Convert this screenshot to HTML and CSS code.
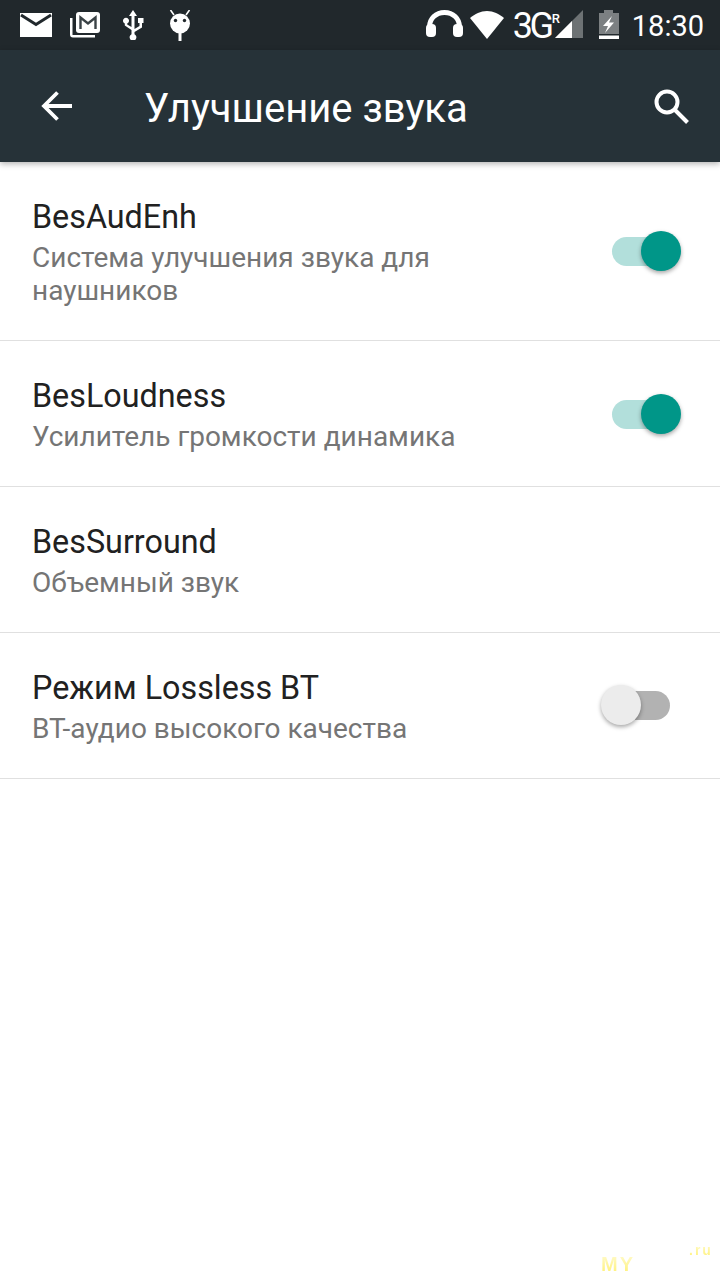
FILE: index.html
```html
<!DOCTYPE html>
<html lang="ru">
<head>
<meta charset="utf-8">
<title>Улучшение звука</title>
<link rel="stylesheet" href="styles.css">
</head>
<body>
<div class="screen">
  <div class="statusbar">
    <div class="status-left">
      <svg class="ic-mail" viewBox="0 0 32 24"><path fill="#fff" d="M0 0h32v24H0z"/><path fill="none" stroke="#21282c" stroke-width="3" d="M1 2l15 9.500L31 2"/></svg>
      <svg class="ic-gmail" viewBox="0 0 30 26"><rect x="6" y="0" width="24" height="21" rx="3" fill="#fff"/><path fill="none" stroke="#3a4246" stroke-width="2.400" d="M10.500 17V5.500l7.500 6 7.500-6V17"/><path fill="#fff" d="M0 6h2.500v17H25v2.500H3a3 3 0 0 1-3-3z"/></svg>
      <svg class="ic-usb" viewBox="0 0 22 30"><path fill="#fff" d="M11 0l4 6h-2.500v13l5-3v-3H16V8h5.500v5H20v4.500l-7.500 4.500v2.200a3.400 3.400 0 1 1-3 0V20L2.800 15.500v-2a3 3 0 1 1 2.400 0v1L9.500 17V6H7z"/></svg>
      <svg class="ic-android" viewBox="0 0 24 31"><path stroke="#fff" stroke-width="1.600" d="M6 5L2.500 0M18 5l3.500-5"/><circle cx="12" cy="13.500" r="10" fill="#fff"/><path fill="#fff" d="M10.500 22h3v9h-3z"/><circle cx="7.500" cy="10.500" r="1.700" fill="#21282c"/><circle cx="16.500" cy="10.500" r="1.700" fill="#21282c"/></svg>
    </div>
    <div class="status-right">
      <svg class="ic-head" viewBox="0 0 37 27"><path fill="none" stroke="#fff" stroke-width="5" d="M3.500 22v-5C3.500 8.500 10 2.500 18.500 2.500S33.500 8.500 33.500 17v5"/><rect x="0" y="14" width="10" height="13" rx="4" fill="#fff"/><rect x="27" y="14" width="10" height="13" rx="4" fill="#fff"/></svg>
      <svg class="ic-wifi" viewBox="0 0 34 28"><path fill="#fff" d="M17 28L0 7C5 3 10.500 0 17 0s12 3 17 7z"/></svg>
      <span class="net">3G<span class="net-r">R</span></span>
      <svg class="ic-signal" viewBox="0 0 28 28"><path fill="#6d7274" d="M28 0v28H0z"/><path fill="#fff" d="M17 11v17H0z"/></svg>
      <svg class="ic-batt" viewBox="0 0 20 29"><path fill="#7c8082" d="M5 0h9v3h6v21H0V3h5z"/><path fill="#fff" d="M0 25.500h20V29H0zM13 6L4 16h5l-3 7 9-10.500h-5l3-6.500z"/></svg>
      <span class="clock">18:30</span>
    </div>
  </div>
  <header class="toolbar">
    <svg class="ic-back" viewBox="0 0 32 32"><path fill="none" stroke="#fff" stroke-width="3.800" d="M32 16H4M17.500 2.500L4 16l13.500 13.500"/></svg>
    <h1 class="title">Улучшение звука</h1>
    <svg class="ic-search" viewBox="0 0 36 36"><circle cx="14" cy="14" r="10.500" fill="none" stroke="#fff" stroke-width="4"/><path stroke="#fff" stroke-width="4" d="M21.500 21.500L34.500 34.500"/></svg>
  </header>
  <main class="list">
    <section class="row">
      <div class="text">
        <div class="name">BesAudEnh</div>
        <div class="desc">Система улучшения звука для<br>наушников</div>
      </div>
      <div class="switch on"><span class="track"></span><span class="thumb"></span></div>
    </section>
    <section class="row">
      <div class="text">
        <div class="name">BesLoudness</div>
        <div class="desc">Усилитель громкости динамика</div>
      </div>
      <div class="switch on"><span class="track"></span><span class="thumb"></span></div>
    </section>
    <section class="row">
      <div class="text">
        <div class="name">BesSurround</div>
        <div class="desc">Объемный звук</div>
      </div>
    </section>
    <section class="row">
      <div class="text">
        <div class="name">Режим Lossless BT</div>
        <div class="desc">BT-аудио высокого качества</div>
      </div>
      <div class="switch off"><span class="track"></span><span class="thumb"></span></div>
    </section>
  </main>
  <div class="wm-my">MY</div>
  <div class="wm-ru">.ru</div>
</div>
</body>
</html>
```
FILE: styles.css
```css
* { box-sizing: border-box; }
html, body { margin: 0; padding: 0; }
body { background: #fff; font-family: Roboto, "Noto Sans", sans-serif; }
.screen { position: relative; width: 720px; height: 1280px; overflow: hidden; background: #fff; }

.statusbar { height: 50px; background: #21282c; display: flex; justify-content: space-between; align-items: flex-start; padding: 10px 16px 0 20px; color: #fff; }
.status-left, .status-right { display: flex; align-items: flex-start; }
.statusbar svg { display: block; flex: none; }
.ic-mail { width: 32px; height: 24px; margin-top: 3px; }
.ic-gmail { width: 30px; height: 26px; margin: 2px 0 0 18px; }
.ic-usb { width: 22px; height: 30px; margin-left: 22px; }
.ic-android { width: 24px; height: 31px; margin-left: 24px; }
.ic-head { width: 37px; height: 27px; }
.ic-wifi { width: 34px; height: 28px; margin: 1px 0 0 7px; }
.net { font-size: 36px; line-height: 32px; letter-spacing: -3.500px; margin-left: 9px; width: 42px; white-space: nowrap; position: relative; }
.net-r { position: absolute; left: 39px; top: 2px; font-size: 13px; line-height: 14px; letter-spacing: 0; font-weight: 500; }
.ic-signal { width: 28px; height: 28px; margin-left: 0; }
.ic-batt { width: 20px; height: 29px; margin-left: 16px; }
.clock { font-size: 29px; line-height: 32px; margin-left: 13px; }

.toolbar { height: 112px; background: #263238; display: flex; align-items: center; padding: 0 31px 0 40px; box-shadow: 0 2px 6px rgba(0,0,0,.3); position: relative; z-index: 1; }
.ic-back { width: 32px; height: 32px; flex: none; }
.title { flex: 1; margin: 6px 0 0 72px; font-size: 40px; font-weight: 400; color: #fff; line-height: 44px; }
.ic-search { width: 36px; height: 36px; flex: none; }

.list { display: flex; flex-direction: column; }
.row { display: flex; align-items: center; justify-content: space-between; border-bottom: 1px solid #e0e0e0; padding: 0 39px 0 32px; height: 146px; }
.row:first-child { height: 179px; }
.name { font-size: 32.300px; line-height: 40px; padding-top: 1px; color: #212121; }
.desc { font-size: 28px; line-height: 33px; color: #757575; margin-top: 4px; }

.switch { position: relative; width: 69px; height: 40px; flex: none; }
.track { position: absolute; top: 6px; width: 58px; height: 29px; border-radius: 15px; }
.thumb { position: absolute; top: 0; width: 40px; height: 40px; border-radius: 50%; box-shadow: 0 2px 4px rgba(0,0,0,.35); }
.row:first-child .switch { margin-bottom: 1px; }
.switch.on .track { background: #b2dfdb; left: 0; }
.switch.on .thumb { left: 29px; background: #009688; }
.switch.off { margin-right: 11px; top: -1px; }
.switch.off .track { background: #b2b2b2; left: 11px; }
.switch.off .thumb { left: 0; background: #ececec; }

.wm-my, .wm-ru { position: absolute; font-family: "Liberation Sans", sans-serif; font-weight: 700; background: linear-gradient(#fffbd0, #fff176); -webkit-background-clip: text; background-clip: text; color: transparent; }
.wm-my { left: 601px; top: 1254px; font-size: 20px; line-height: 20px; letter-spacing: 2px; }
.wm-ru { left: 689px; top: 1242px; font-size: 14px; line-height: 16px; letter-spacing: 2px; }
```
